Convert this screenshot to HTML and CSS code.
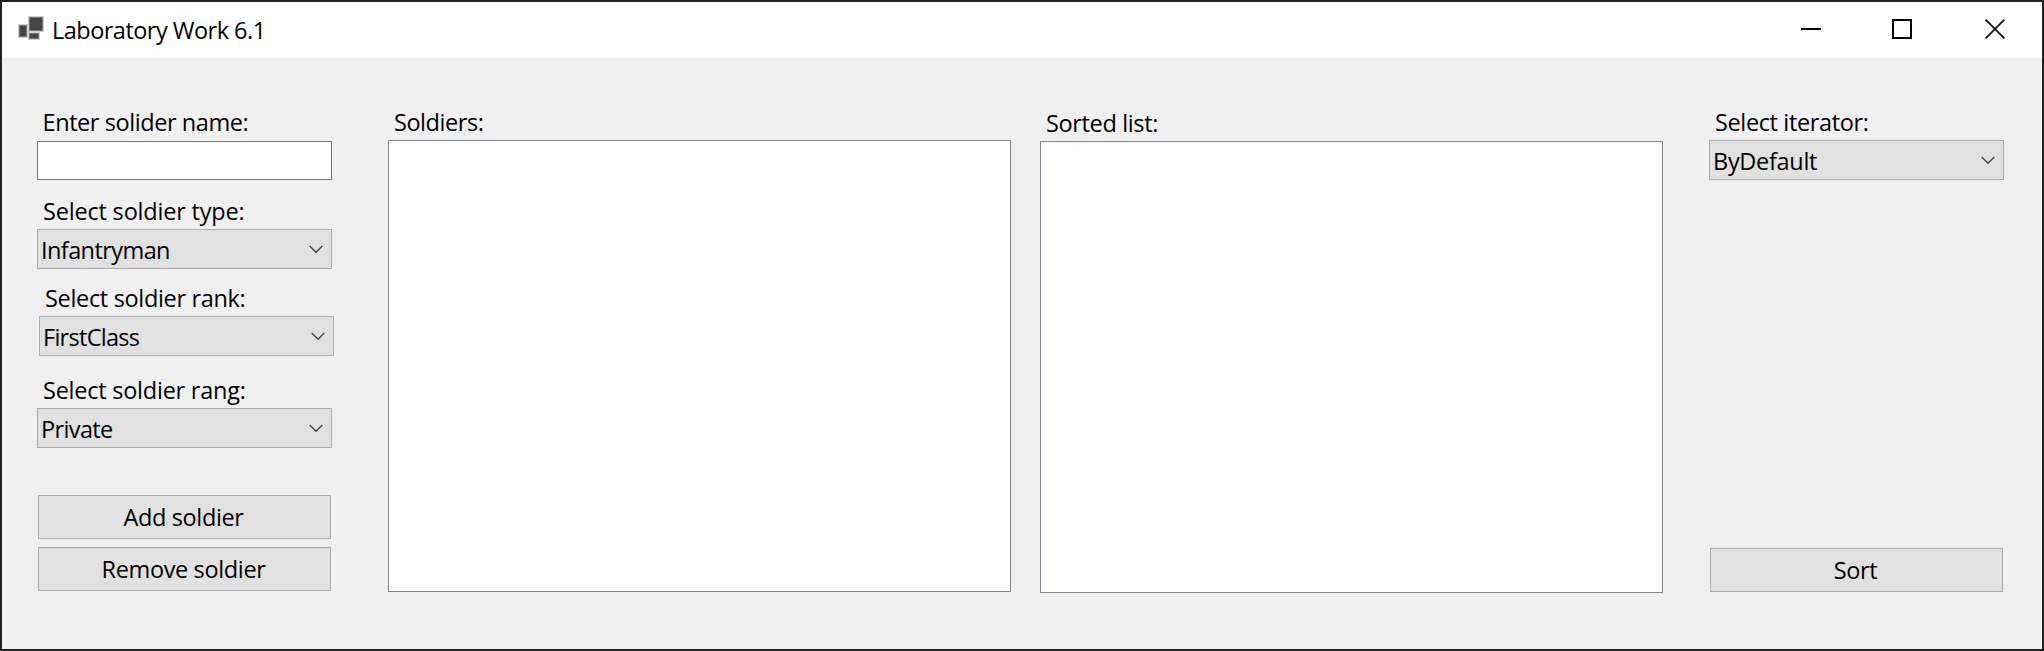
FILE: index.html
```
<!DOCTYPE html>
<html lang="en">
<head>
<meta charset="utf-8">
<title>Laboratory Work 6.1</title>
<link rel="stylesheet" href="styles.css">
</head>
<body>
<div class="window">
  <header class="titlebar">
    <svg class="app-icon" width="28" height="26" viewBox="0 0 28 26">
      <g fill="#444" stroke="#d0d0d0" stroke-width="1">
        <rect x="1.5" y="9.5" width="9" height="13"/>
        <rect x="11.5" y="1.5" width="15" height="15"/>
        <rect x="11.5" y="17.5" width="11" height="7"/>
      </g>
      <g fill="none" stroke="#777" stroke-width="1">
        <rect x="2.5" y="10.5" width="7" height="11"/>
        <rect x="12.5" y="2.5" width="13" height="13"/>
        <rect x="12.5" y="18.5" width="9" height="5"/>
      </g>
    </svg>
    <h1 class="title">Laboratory Work 6.1</h1>
    <div class="controls">
      <svg width="20" height="20" viewBox="0 0 20 20"><path d="M0 10h20" stroke="#000" stroke-width="2"/></svg>
      <svg width="20" height="20" viewBox="0 0 20 20"><rect x="1" y="1" width="18" height="18" fill="none" stroke="#000" stroke-width="2"/></svg>
      <svg width="20" height="20" viewBox="0 0 20 20"><path d="M.6 .6l18.8 18.8M19.4 .6L.6 19.4" stroke="#111" stroke-width="1.8"/></svg>
    </div>
  </header>
  <main class="form">
    <section class="column entry">
      <label class="label name-label">Enter solider name:</label>
      <div class="textbox"></div>
      <label class="label type-label">Select soldier type:</label>
      <div class="combo"><span class="infantry">Infantryman</span><svg class="chevron" viewBox="0 0 14 9"><path d="M.7 .9L7 7.2l6.3-6.3"/></svg></div>
      <div class="rank">
        <label class="label rank-label">Select soldier rank:</label>
        <div class="combo"><span class="first">FirstClass</span><svg class="chevron" viewBox="0 0 14 9"><path d="M.7 .9L7 7.2l6.3-6.3"/></svg></div>
      </div>
      <label class="label rang-label">Select soldier rang:</label>
      <div class="combo"><span class="private">Private</span><svg class="chevron" viewBox="0 0 14 9"><path d="M.7 .9L7 7.2l6.3-6.3"/></svg></div>
      <div class="actions">
        <button class="button">Add soldier</button>
        <button class="button">Remove soldier</button>
      </div>
    </section>
    <section class="column soldiers">
      <label class="label soldiers-label">Soldiers:</label>
      <div class="listbox"></div>
    </section>
    <section class="column sorted">
      <label class="label sorted-label">Sorted list:</label>
      <div class="listbox"></div>
    </section>
    <section class="column iterator">
      <label class="label iterator-label">Select iterator:</label>
      <div class="combo"><span class="default">ByDefault</span><svg class="chevron" viewBox="0 0 14 9"><path d="M.7 .9L7 7.2l6.3-6.3"/></svg></div>
      <button class="button sort">Sort</button>
    </section>
  </main>
</div>
</body>
</html>
```
FILE: styles.css
```
* { box-sizing: border-box; }

body {
  margin: 0;
  font: 23.5px/32px "Open Sans", "Noto Sans", sans-serif;
  color: #000;
}

.window {
  display: flex;
  flex-direction: column;
  width: 2044px;
  height: 651px;
  border: 2px solid #222;
  background: #f0f0f0;
}

.titlebar {
  display: flex;
  height: 56px;
  flex: none;
  background: #fff;
}

.app-icon { margin: 13px 0 0 15px; }

.title {
  margin: 12px 0 0 7px;
  font-size: inherit;
  font-weight: 400;
  letter-spacing: -.52px;
}

.controls {
  display: flex;
  gap: 72px;
  margin: 17px 37px 0 auto;
}
.controls svg + svg { margin-left: -1px; }
.controls svg:last-child { margin-left: 1px; }

.form {
  display: flex;
  align-items: flex-start;
  padding: 47px 38px 0 35px;
}

.column { display: flex; flex-direction: column; }

.label {
  display: block;
  height: 35px;
  padding: 1px 0 0 6px;
  white-space: nowrap;
}

.textbox {
  height: 39px;
  margin-top: 1px;
  border: 1px solid #7a7a7a;
  background: #fff;
}

.combo {
  display: flex;
  justify-content: space-between;
  width: 295px;
  height: 40px;
  padding: 4px 8.5px 0 3px;
  border: 1px solid #adadad;
  background: #e1e1e1;
}

.chevron {
  width: 14px;
  height: 9px;
  margin-top: 11px;
  fill: none;
  stroke: #444;
  stroke-width: 1.4;
}

.button {
  display: block;
  width: 293px;
  height: 44px;
  padding: 0 2px 0 0;
  border: 1px solid #adadad;
  background: #e1e1e1;
  font: inherit;
  color: inherit;
  letter-spacing: -.36px;
}

.entry { width: 295px; }
.name-label { padding-left: 5.5px; letter-spacing: -.42px; }
.type-label { margin-top: 14px; letter-spacing: -.19px; }
.rank { margin: 12px 0 0 2px; }
.rank-label { letter-spacing: -.33px; }
.rang-label { margin-top: 17px; letter-spacing: -.24px; }
.infantry { letter-spacing: -.58px; }
.first { letter-spacing: -.72px; }
.private { letter-spacing: -.63px; }
.default { letter-spacing: -.3px; }

.actions {
  display: flex;
  flex-direction: column;
  gap: 8px;
  margin: 47px 0 0 1px;
}

.soldiers { width: 623px; margin-left: 56px; }
.sorted { width: 623px; margin: 1px 0 0 29px; }
.iterator { margin-left: 46px; }
.listbox { height: 452px; border: 1px solid #828790; background: #fff; }
.soldiers-label { letter-spacing: -.45px; }
.sorted-label { letter-spacing: -.36px; }
.iterator-label { letter-spacing: -.37px; }
.sort { margin: 368px 0 0 1px; padding-right: 2px; }
```
